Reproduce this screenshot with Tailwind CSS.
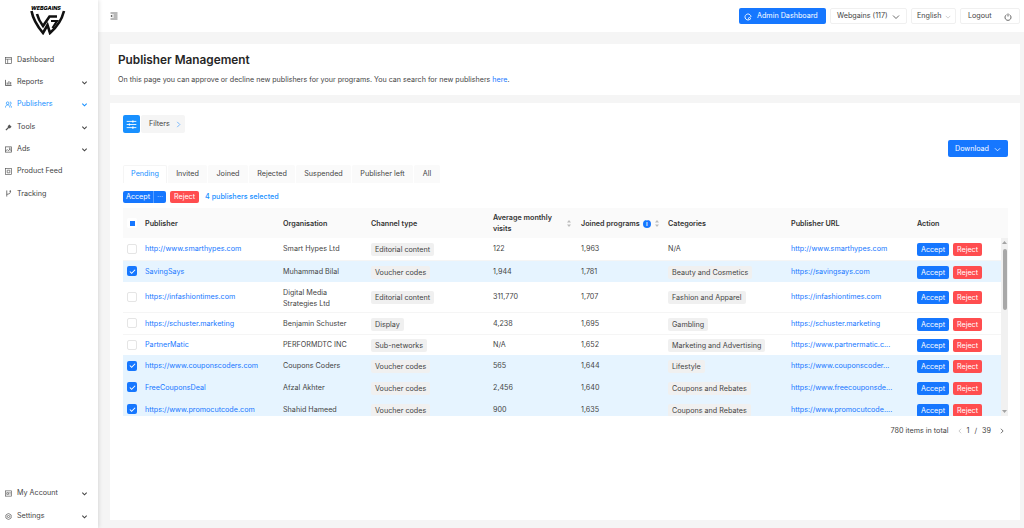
<!DOCTYPE html>
<html lang="en">
<head>
    <meta charset="UTF-8">
    <title>Publisher Management</title>
    <script src="https://cdn.jsdelivr.net/npm/@tailwindcss/browser@4"></script>
</head>
<body class="font-['Inter',sans-serif] text-[7.2px] text-[#444] bg-[#f5f5f5]">
<div class="flex h-[528px] w-[1024px] overflow-hidden">

    <!-- Sidebar -->
    <aside class="w-[98px] shrink-0 bg-white shadow-[1px_0_4px_rgba(0,0,0,0.12)] flex flex-col z-10">
        <div class="h-[37px] relative">
            <svg class="absolute left-[30px] top-[7px]" width="36" height="28" viewBox="0 0 36 28" fill="none" stroke="#111" stroke-width="2.6">
                <path d="M1.500 4 C3 12 8 20 13 26 L17.500 18 L20 26 C27 20 32 12 34 4"/>
                <path d="M7 7 C8 11 10 15 13 19 L19.500 9.500 L27 9.500"/>
                <path d="M21 14 L27 14 L22.500 21" stroke-width="2.200"/>
            </svg>
            <span class="absolute left-[31px] top-[5px] text-[5.400px] leading-[6px] font-extrabold italic text-black">WEBGAINS</span>
        </div>
        <nav class="mt-[12px] flex flex-col">
            <a class="h-[22.300px] flex items-center pl-[5px] pr-[10px] gap-[5px]">
                <svg width="7" height="7" viewBox="0 0 16 16" fill="none" stroke="#555" stroke-width="1.500"><rect x="1" y="1" width="14" height="14"/><path d="M1 5h14M6 5v10"/></svg>
                <span>Dashboard</span>
            </a>
            <a class="h-[22.300px] flex items-center pl-[5px] pr-[10px] gap-[5px]">
                <svg width="7" height="7" viewBox="0 0 16 16" fill="none" stroke="#555" stroke-width="2"><path d="M1 2v13h14M5 13V8M9 13V5M13 13V7"/></svg>
                <span>Reports</span>
                <svg class="ml-auto" width="7" height="7" viewBox="0 0 16 16" fill="none" stroke="#444" stroke-width="2.500"><path d="M3 6l5 5 5-5"/></svg>
            </a>
            <a class="h-[22.300px] flex items-center pl-[5px] pr-[10px] gap-[5px] text-[#1890ff]">
                <svg width="7" height="7" viewBox="0 0 16 16" fill="none" stroke="#1890ff" stroke-width="1.600"><circle cx="6" cy="5" r="3"/><path d="M1 15c0-4 2-6 5-6s5 2 5 6M11 2a3 3 0 0 1 0 6M12 10c2 1 3 2 3 5"/></svg>
                <span>Publishers</span>
                <svg class="ml-auto" width="7" height="7" viewBox="0 0 16 16" fill="none" stroke="#1890ff" stroke-width="2.500"><path d="M3 6l5 5 5-5"/></svg>
            </a>
            <a class="h-[22.300px] flex items-center pl-[5px] pr-[10px] gap-[5px]">
                <svg width="7" height="7" viewBox="0 0 16 16" fill="#555"><path d="M1 13l6-6-1-2 4-4 5 5-4 4-2-1-6 6z"/></svg>
                <span>Tools</span>
                <svg class="ml-auto" width="7" height="7" viewBox="0 0 16 16" fill="none" stroke="#444" stroke-width="2.500"><path d="M3 6l5 5 5-5"/></svg>
            </a>
            <a class="h-[22.300px] flex items-center pl-[5px] pr-[10px] gap-[5px]">
                <svg width="7" height="7" viewBox="0 0 16 16" fill="none" stroke="#555" stroke-width="1.600"><rect x="1" y="2" width="14" height="12"/><path d="M1 12l4-4 3 3 3-4 4 5"/><circle cx="11" cy="5" r="1"/></svg>
                <span>Ads</span>
                <svg class="ml-auto" width="7" height="7" viewBox="0 0 16 16" fill="none" stroke="#444" stroke-width="2.500"><path d="M3 6l5 5 5-5"/></svg>
            </a>
            <a class="h-[22.300px] flex items-center pl-[5px] pr-[10px] gap-[5px]">
                <svg width="7" height="7" viewBox="0 0 16 16" fill="none" stroke="#555" stroke-width="1.500"><rect x="1" y="1" width="14" height="14"/><path d="M5 5h6v6H5z"/></svg>
                <span>Product Feed</span>
            </a>
            <a class="h-[22.300px] flex items-center pl-[5px] pr-[10px] gap-[5px]">
                <svg width="7" height="7" viewBox="0 0 16 16" fill="none" stroke="#555" stroke-width="1.800"><path d="M4 1v14M12 2v4c0 2-3 3-8 4"/><circle cx="12" cy="2.500" r="1"/></svg>
                <span>Tracking</span>
            </a>
        </nav>
        <div class="mt-auto flex flex-col">
            <a class="h-[23px] flex items-center pl-[5px] pr-[10px] gap-[5px]">
                <svg width="7" height="7" viewBox="0 0 16 16" fill="none" stroke="#555" stroke-width="1.500"><rect x="1" y="2" width="14" height="12"/><path d="M4 6h4v4H4zM10 6h3M10 9h3"/></svg>
                <span>My Account</span>
                <svg class="ml-auto" width="7" height="7" viewBox="0 0 16 16" fill="none" stroke="#444" stroke-width="2.500"><path d="M3 6l5 5 5-5"/></svg>
            </a>
            <a class="h-[23px] flex items-center pl-[5px] pr-[10px] gap-[5px]">
                <svg width="7" height="7" viewBox="0 0 16 16" fill="none" stroke="#555" stroke-width="1.600"><path d="M8 1l6 3.500v7L8 15l-6-3.500v-7z"/><circle cx="8" cy="8" r="2.500"/></svg>
                <span>Settings</span>
                <svg class="ml-auto" width="7" height="7" viewBox="0 0 16 16" fill="none" stroke="#444" stroke-width="2.500"><path d="M3 6l5 5 5-5"/></svg>
            </a>
        </div>
    </aside>

    <div class="flex-1 flex flex-col min-w-0">
        <!-- Top bar -->
        <header class="h-[32px] bg-white flex items-center pl-[12px] pr-[4px] shrink-0">
            <svg width="8" height="8" viewBox="0 0 16 16" fill="none" stroke="#444" stroke-width="1.500"><path d="M1 2h14M7 6h8M7 10h8M1 14h14"/><path d="M4.500 5L1 8l3.500 3z" fill="#444" stroke="none"/></svg>
            <a class="ml-auto w-[87px] h-[16px] pt-[1px] bg-[#1677ff] text-white rounded-[2px] flex items-center pl-[5px] gap-[5px]">
                <svg width="8" height="8" viewBox="0 0 16 16" fill="none" stroke="#fff" stroke-width="1.800"><path d="M14 8a6 6 0 1 0-3 5.200"/><circle cx="11" cy="11" r="2"/></svg>
                Admin Dashboard
            </a>
            <div class="ml-[4px] w-[77px] h-[16px] pt-[1px] border border-[#f0f0f0] rounded-[2px] flex items-center pl-[6px] gap-[4px]">
                Webgains (117)
                <svg width="8" height="8" viewBox="0 0 16 16" fill="none" stroke="#444" stroke-width="1.600"><path d="M2 5l6 6 6-6"/></svg>
            </div>
            <div class="ml-[4px] w-[45px] h-[16px] pt-[1px] border border-[#f0f0f0] rounded-[2px] flex items-center pl-[5px] gap-[3px]">
                English
                <svg width="6" height="6" viewBox="0 0 16 16" fill="none" stroke="#bbb" stroke-width="1.800"><path d="M2 5l6 6 6-6"/></svg>
            </div>
            <div class="ml-[4px] w-[60px] h-[16px] pt-[1px] border border-[#f0f0f0] rounded-[2px] flex items-center pl-[7px] pr-[7px] justify-between">
                Logout
                <svg width="8" height="8" viewBox="0 0 16 16" fill="none" stroke="#444" stroke-width="1.600"><path d="M5 3.500a6 6 0 1 0 6 0M8 1v6"/></svg>
            </div>
        </header>

        <main class="flex-1 pl-[12px] pr-[4px] pt-[12px] pb-[8px] flex flex-col gap-[8px] min-h-0">
            <!-- Title card -->
            <section class="h-[51px] bg-white pl-[8px] pt-[8px] shrink-0">
                <h1 class="text-[11.800px] leading-[17px] font-semibold text-[#262626]">Publisher Management</h1>
                <p class="mt-[5px] text-[7.130px] leading-[11px]">On this page you can approve or decline new publishers for your programs. You can search for new publishers <a class="text-[#1677ff]">here</a>.</p>
            </section>

            <!-- Table card -->
            <section class="flex-1 bg-white pl-[13px] pr-[12px] pt-[12px]">
                <div class="flex h-[18px]">
                    <button class="w-[17px] bg-[#1890ff] rounded-[2px] flex items-center justify-center">
                        <svg width="11" height="11" viewBox="0 0 16 16" fill="none" stroke="#fff" stroke-width="1.300"><path d="M1 3.500h14M1 8h14M1 12.500h14"/><path d="M10 2v3M5 6.500v3M10 11v3" stroke-width="1.800"/></svg>
                    </button>
                    <div class="ml-[1px] w-[44px] bg-[#f5f5f5] rounded-[2px] flex items-center pl-[8px] gap-[5px]">
                        Filters
                        <svg width="7" height="7" viewBox="0 0 16 16" fill="none" stroke="#5aa9ff" stroke-width="1.800"><path d="M5 2l6 6-6 6"/></svg>
                    </div>
                </div>
                <div class="flex justify-end mt-[7px] h-[17px]">
                    <button class="w-[60px] pt-[1px] bg-[#1677ff] text-white rounded-[2px] flex items-center justify-center gap-[5px]">
                        Download
                        <svg width="7" height="7" viewBox="0 0 16 16" fill="none" stroke="#fff" stroke-width="1.800"><path d="M2 5l6 6 6-6"/></svg>
                    </button>
                </div>
                <div class="flex gap-[1px] mt-[8px] h-[18px]">
                    <div class="w-[44px] bg-white border border-b-0 border-[#f5f5f5] rounded-t-[2px] flex items-center justify-center text-[#1890ff]">Pending</div>
                    <div class="w-[39px] bg-[#fafafa] rounded-t-[2px] flex items-center justify-center">Invited</div>
                    <div class="w-[40px] bg-[#fafafa] rounded-t-[2px] flex items-center justify-center">Joined</div>
                    <div class="w-[46px] bg-[#fafafa] rounded-t-[2px] flex items-center justify-center">Rejected</div>
                    <div class="w-[55px] bg-[#fafafa] rounded-t-[2px] flex items-center justify-center">Suspended</div>
                    <div class="w-[61px] bg-[#fafafa] rounded-t-[2px] flex items-center justify-center">Publisher left</div>
                    <div class="w-[26px] bg-[#fafafa] rounded-t-[2px] flex items-center justify-center">All</div>
                </div>
                <div class="flex items-center mt-[8px] h-[12px]">
                    <div class="w-[43px] h-[12px] bg-[#1677ff] text-white rounded-[2px] flex">
                        <span class="w-[31px] text-center leading-[12px] border-r border-[#5aa0ff]">Accept</span>
                        <span class="flex-1 text-center leading-[12px] text-[#a8ccff]">···</span>
                    </div>
                    <button class="ml-[4px] w-[29px] h-[12px] bg-[#ff4d4f] text-white rounded-[2px]">Reject</button>
                    <span class="ml-[6px] font-medium text-[#1890ff]">4 publishers selected</span>
                </div>

                <div class="relative mt-[5px] h-[208px] overflow-hidden">
                    <table class="w-[885px] table-fixed border-collapse [&_td:not(:first-child)]:pt-[2px]">
                        <colgroup>
                            <col class="w-[16px]"><col class="w-[138px]"><col class="w-[88px]"><col class="w-[122px]"><col class="w-[88px]"><col class="w-[87px]"><col class="w-[123px]"><col class="w-[126px]"><col class="w-[97px]">
                        </colgroup>
                        <thead>
                            <tr class="h-[30px] bg-[#fafafa] text-left font-semibold text-[#333]">
                                <th class="pl-[4px]"><span class="block w-[10px] h-[10px] bg-white rounded-[2px] relative"><span class="absolute left-[2.500px] top-[2.500px] w-[5px] h-[5px] bg-[#1677ff]"></span></span></th>
                                <th class="pl-[6px] pt-[2px] font-semibold">Publisher</th>
                                <th class="pl-[6px] pt-[2px] font-semibold">Organisation</th>
                                <th class="pl-[6px] pt-[2px] font-semibold">Channel type</th>
                                <th class="pl-[6px] font-semibold leading-[11px]"><div class="flex items-center justify-between pr-[3px]"><span>Average monthly<br>visits</span><svg width="6" height="9" viewBox="0 0 6 9" fill="#bbb"><path d="M3 1l2 2.500H1zM3 8L1 5.500h4z"/></svg></div></th>
                                <th class="pl-[6px] pt-[2px] font-semibold"><div class="flex items-center pr-[2px]"><span>Joined programs</span><span class="ml-[3px] w-[8px] h-[8px] rounded-full bg-[#1677ff] text-white text-[6px] leading-[8px] text-center">i</span><svg class="ml-auto" width="6" height="9" viewBox="0 0 6 9" fill="#bbb"><path d="M3 1l2 2.500H1zM3 8L1 5.500h4z"/></svg></div></th>
                                <th class="pl-[6px] pt-[2px] font-semibold">Categories</th>
                                <th class="pl-[6px] pt-[2px] font-semibold">Publisher URL</th>
                                <th class="pl-[6px] pt-[2px] font-semibold">Action</th>
                            </tr>
                        </thead>
                        <tbody>
                            <tr class="h-[22px] border-b border-[#f5f5f5]">
                                <td class="pl-[4px]"><span class="block w-[10px] h-[10px] border border-[#e5e5e5] rounded-[2px]"></span></td>
                                <td class="pl-[6px] text-[#1677ff]">http://www.smarthypes.com</td>
                                <td class="pl-[6px]">Smart Hypes Ltd</td>
                                <td class="pl-[6px]"><span class="inline-block px-[4px] leading-[13px] bg-[#f0f0f0] rounded-[2px]">Editorial content</span></td>
                                <td class="pl-[6px]">122</td>
                                <td class="pl-[6px]">1,963</td>
                                <td class="pl-[6px]">N/A</td>
                                <td class="pl-[6px] text-[#1677ff]">http://www.smarthypes.com</td>
                                <td class="pl-[6px]"><div class="flex gap-[4px]"><span class="w-[32px] h-[13px] leading-[13px] bg-[#1677ff] text-white rounded-[2px] text-center">Accept</span><span class="w-[29px] h-[13px] leading-[13px] bg-[#ff4d4f] text-white rounded-[2px] text-center">Reject</span></div></td>
                            </tr>
                            <tr class="h-[22px] bg-[#e6f4ff]">
                                <td class="pl-[4px]"><span class="flex items-center justify-center w-[10px] h-[10px] bg-[#1677ff] rounded-[2px]"><svg width="7" height="7" viewBox="0 0 8 8" fill="none" stroke="#fff" stroke-width="1.200"><path d="M1 4l2 2 4-4"/></svg></span></td>
                                <td class="pl-[6px] text-[#1677ff]">SavingSays</td>
                                <td class="pl-[6px]">Muhammad Bilal</td>
                                <td class="pl-[6px]"><span class="inline-block px-[4px] leading-[13px] bg-[#f0f0f0] rounded-[2px]">Voucher codes</span></td>
                                <td class="pl-[6px]">1,944</td>
                                <td class="pl-[6px]">1,781</td>
                                <td class="pl-[6px]"><span class="inline-block px-[4px] leading-[13px] bg-[#f0f0f0] rounded-[2px]">Beauty and Cosmetics</span></td>
                                <td class="pl-[6px] text-[#1677ff]">https://savingsays.com</td>
                                <td class="pl-[6px]"><div class="flex gap-[4px]"><span class="w-[32px] h-[13px] leading-[13px] bg-[#1677ff] text-white rounded-[2px] text-center">Accept</span><span class="w-[29px] h-[13px] leading-[13px] bg-[#ff4d4f] text-white rounded-[2px] text-center">Reject</span></div></td>
                            </tr>
                            <tr class="h-[30px] border-b border-[#f5f5f5]">
                                <td class="pl-[4px]"><span class="block w-[10px] h-[10px] border border-[#e5e5e5] rounded-[2px]"></span></td>
                                <td class="pl-[6px] text-[#1677ff]">https://infashiontimes.com</td>
                                <td class="pl-[6px] leading-[11px]">Digital Media<br>Strategies Ltd</td>
                                <td class="pl-[6px]"><span class="inline-block px-[4px] leading-[13px] bg-[#f0f0f0] rounded-[2px]">Editorial content</span></td>
                                <td class="pl-[6px]">311,770</td>
                                <td class="pl-[6px]">1,707</td>
                                <td class="pl-[6px]"><span class="inline-block px-[4px] leading-[13px] bg-[#f0f0f0] rounded-[2px]">Fashion and Apparel</span></td>
                                <td class="pl-[6px] text-[#1677ff]">https://infashiontimes.com</td>
                                <td class="pl-[6px]"><div class="flex gap-[4px]"><span class="w-[32px] h-[13px] leading-[13px] bg-[#1677ff] text-white rounded-[2px] text-center">Accept</span><span class="w-[29px] h-[13px] leading-[13px] bg-[#ff4d4f] text-white rounded-[2px] text-center">Reject</span></div></td>
                            </tr>
                            <tr class="h-[22px] border-b border-[#f5f5f5]">
                                <td class="pl-[4px]"><span class="block w-[10px] h-[10px] border border-[#e5e5e5] rounded-[2px]"></span></td>
                                <td class="pl-[6px] text-[#1677ff]">https://schuster.marketing</td>
                                <td class="pl-[6px]">Benjamin Schuster</td>
                                <td class="pl-[6px]"><span class="inline-block px-[4px] leading-[13px] bg-[#f0f0f0] rounded-[2px]">Display</span></td>
                                <td class="pl-[6px]">4,238</td>
                                <td class="pl-[6px]">1,695</td>
                                <td class="pl-[6px]"><span class="inline-block px-[4px] leading-[13px] bg-[#f0f0f0] rounded-[2px]">Gambling</span></td>
                                <td class="pl-[6px] text-[#1677ff]">https://schuster.marketing</td>
                                <td class="pl-[6px]"><div class="flex gap-[4px]"><span class="w-[32px] h-[13px] leading-[13px] bg-[#1677ff] text-white rounded-[2px] text-center">Accept</span><span class="w-[29px] h-[13px] leading-[13px] bg-[#ff4d4f] text-white rounded-[2px] text-center">Reject</span></div></td>
                            </tr>
                            <tr class="h-[21px]">
                                <td class="pl-[4px]"><span class="block w-[10px] h-[10px] border border-[#e5e5e5] rounded-[2px]"></span></td>
                                <td class="pl-[6px] text-[#1677ff]">PartnerMatic</td>
                                <td class="pl-[6px]">PERFORMDTC INC</td>
                                <td class="pl-[6px]"><span class="inline-block px-[4px] leading-[13px] bg-[#f0f0f0] rounded-[2px]">Sub-networks</span></td>
                                <td class="pl-[6px]">N/A</td>
                                <td class="pl-[6px]">1,652</td>
                                <td class="pl-[6px]"><span class="inline-block px-[4px] leading-[13px] bg-[#f0f0f0] rounded-[2px]">Marketing and Advertising</span></td>
                                <td class="pl-[6px] text-[#1677ff]">https://www.partnermatic.c...</td>
                                <td class="pl-[6px]"><div class="flex gap-[4px]"><span class="w-[32px] h-[13px] leading-[13px] bg-[#1677ff] text-white rounded-[2px] text-center">Accept</span><span class="w-[29px] h-[13px] leading-[13px] bg-[#ff4d4f] text-white rounded-[2px] text-center">Reject</span></div></td>
                            </tr>
                            <tr class="h-[21px] bg-[#e6f4ff]">
                                <td class="pl-[4px]"><span class="flex items-center justify-center w-[10px] h-[10px] bg-[#1677ff] rounded-[2px]"><svg width="7" height="7" viewBox="0 0 8 8" fill="none" stroke="#fff" stroke-width="1.200"><path d="M1 4l2 2 4-4"/></svg></span></td>
                                <td class="pl-[6px] text-[#1677ff]">https://www.couponscoders.com</td>
                                <td class="pl-[6px]">Coupons Coders</td>
                                <td class="pl-[6px]"><span class="inline-block px-[4px] leading-[13px] bg-[#f0f0f0] rounded-[2px]">Voucher codes</span></td>
                                <td class="pl-[6px]">565</td>
                                <td class="pl-[6px]">1,644</td>
                                <td class="pl-[6px]"><span class="inline-block px-[4px] leading-[13px] bg-[#f0f0f0] rounded-[2px]">Lifestyle</span></td>
                                <td class="pl-[6px] text-[#1677ff]">https://www.couponscoder...</td>
                                <td class="pl-[6px]"><div class="flex gap-[4px]"><span class="w-[32px] h-[13px] leading-[13px] bg-[#1677ff] text-white rounded-[2px] text-center">Accept</span><span class="w-[29px] h-[13px] leading-[13px] bg-[#ff4d4f] text-white rounded-[2px] text-center">Reject</span></div></td>
                            </tr>
                            <tr class="h-[22px] bg-[#e6f4ff]">
                                <td class="pl-[4px]"><span class="flex items-center justify-center w-[10px] h-[10px] bg-[#1677ff] rounded-[2px]"><svg width="7" height="7" viewBox="0 0 8 8" fill="none" stroke="#fff" stroke-width="1.200"><path d="M1 4l2 2 4-4"/></svg></span></td>
                                <td class="pl-[6px] text-[#1677ff]">FreeCouponsDeal</td>
                                <td class="pl-[6px]">Afzal Akhter</td>
                                <td class="pl-[6px]"><span class="inline-block px-[4px] leading-[13px] bg-[#f0f0f0] rounded-[2px]">Voucher codes</span></td>
                                <td class="pl-[6px]">2,456</td>
                                <td class="pl-[6px]">1,640</td>
                                <td class="pl-[6px]"><span class="inline-block px-[4px] leading-[13px] bg-[#f0f0f0] rounded-[2px]">Coupons and Rebates</span></td>
                                <td class="pl-[6px] text-[#1677ff]">https://www.freecouponsde...</td>
                                <td class="pl-[6px]"><div class="flex gap-[4px]"><span class="w-[32px] h-[13px] leading-[13px] bg-[#1677ff] text-white rounded-[2px] text-center">Accept</span><span class="w-[29px] h-[13px] leading-[13px] bg-[#ff4d4f] text-white rounded-[2px] text-center">Reject</span></div></td>
                            </tr>
                            <tr class="h-[22px] bg-[#e6f4ff]">
                                <td class="pl-[4px]"><span class="flex items-center justify-center w-[10px] h-[10px] bg-[#1677ff] rounded-[2px]"><svg width="7" height="7" viewBox="0 0 8 8" fill="none" stroke="#fff" stroke-width="1.200"><path d="M1 4l2 2 4-4"/></svg></span></td>
                                <td class="pl-[6px] text-[#1677ff]">https://www.promocutcode.com</td>
                                <td class="pl-[6px]">Shahid Hameed</td>
                                <td class="pl-[6px]"><span class="inline-block px-[4px] leading-[13px] bg-[#f0f0f0] rounded-[2px]">Voucher codes</span></td>
                                <td class="pl-[6px]">900</td>
                                <td class="pl-[6px]">1,635</td>
                                <td class="pl-[6px]"><span class="inline-block px-[4px] leading-[13px] bg-[#f0f0f0] rounded-[2px]">Coupons and Rebates</span></td>
                                <td class="pl-[6px] text-[#1677ff]">https://www.promocutcode....</td>
                                <td class="pl-[6px]"><div class="flex gap-[4px]"><span class="w-[32px] h-[13px] leading-[13px] bg-[#1677ff] text-white rounded-[2px] text-center">Accept</span><span class="w-[29px] h-[13px] leading-[13px] bg-[#ff4d4f] text-white rounded-[2px] text-center">Reject</span></div></td>
                            </tr>
                        </tbody>
                    </table>
                    <!-- scrollbar -->
                    <div class="absolute right-0 top-[30px] bottom-0 w-[7px] bg-[#f1f1f1] flex flex-col items-center">
                        <svg class="mt-[3px]" width="5" height="3" viewBox="0 0 5 3" fill="#a3a3a3"><path d="M2.500 0L5 3H0z"/></svg>
                        <div class="mt-[5px] w-[4px] h-[61px] bg-[#a8a8a8] rounded-[2px]"></div>
                        <svg class="mt-auto mb-[3px]" width="5" height="3" viewBox="0 0 5 3" fill="#a3a3a3"><path d="M2.500 3L5 0H0z"/></svg>
                    </div>
                </div>

                <!-- Pagination -->
                <div class="flex items-center justify-end mt-[10px] h-[10px]">
                    <span>780 items in total</span>
                    <svg class="ml-[8px]" width="6" height="6" viewBox="0 0 16 16" fill="none" stroke="#bbb" stroke-width="2"><path d="M11 2L5 8l6 6"/></svg>
                    <span class="ml-[4px]">1</span>
                    <span class="ml-[5px]">/</span>
                    <span class="ml-[5px]">39</span>
                    <svg class="ml-[8px] mr-[3px]" width="6" height="6" viewBox="0 0 16 16" fill="none" stroke="#444" stroke-width="2"><path d="M5 2l6 6-6 6"/></svg>
                </div>
            </section>
        </main>
    </div>
</div>
</body>
</html>
